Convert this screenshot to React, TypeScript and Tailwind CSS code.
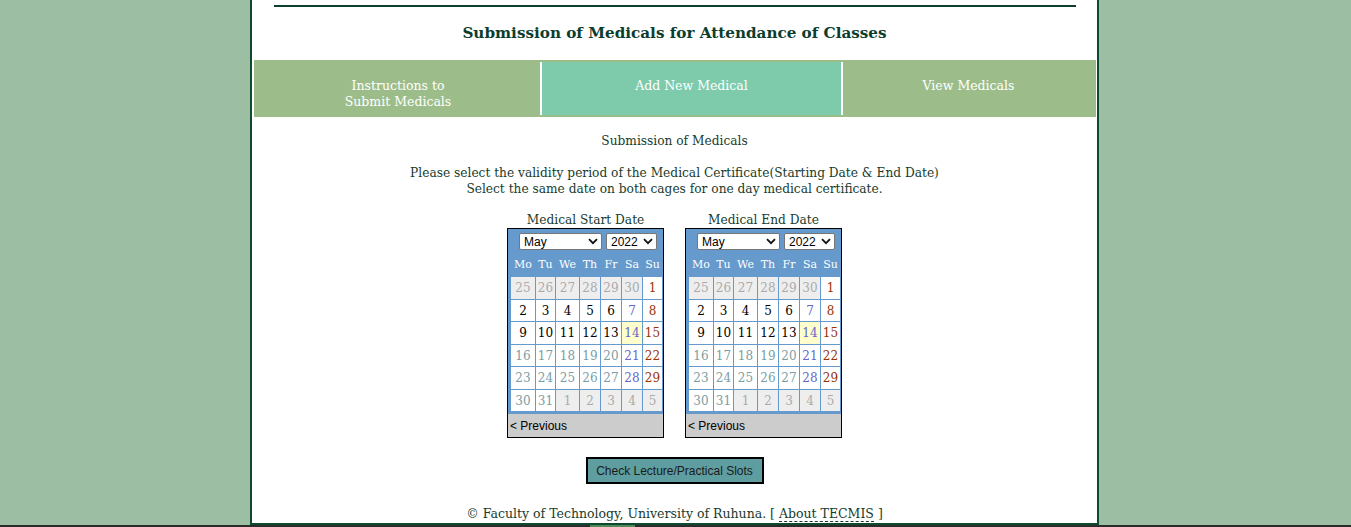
import React from 'react';

const serif = { fontFamily: '"DejaVu Serif", Georgia, serif' };
const sans = { fontFamily: '"Liberation Sans", Tahoma, sans-serif' };

type Day = { n: number; kind: 'other' | 'past' | 'sat' | 'sun' | 'today' | 'future' };

const weeks: Day[][] = [
    [25, 26, 27, 28, 29, 30].map((n) => ({ n, kind: 'other' as const })).concat([{ n: 1, kind: 'sun' }]),
    [
        { n: 2, kind: 'past' },
        { n: 3, kind: 'past' },
        { n: 4, kind: 'past' },
        { n: 5, kind: 'past' },
        { n: 6, kind: 'past' },
        { n: 7, kind: 'sat' },
        { n: 8, kind: 'sun' },
    ],
    [
        { n: 9, kind: 'past' },
        { n: 10, kind: 'past' },
        { n: 11, kind: 'past' },
        { n: 12, kind: 'past' },
        { n: 13, kind: 'past' },
        { n: 14, kind: 'today' },
        { n: 15, kind: 'sun' },
    ],
    [
        { n: 16, kind: 'future' },
        { n: 17, kind: 'future' },
        { n: 18, kind: 'future' },
        { n: 19, kind: 'future' },
        { n: 20, kind: 'future' },
        { n: 21, kind: 'sat' },
        { n: 22, kind: 'sun' },
    ],
    [
        { n: 23, kind: 'future' },
        { n: 24, kind: 'future' },
        { n: 25, kind: 'future' },
        { n: 26, kind: 'future' },
        { n: 27, kind: 'future' },
        { n: 28, kind: 'sat' },
        { n: 29, kind: 'sun' },
    ],
    [
        { n: 30, kind: 'future' },
        { n: 31, kind: 'future' },
        ...[1, 2, 3, 4, 5].map((n) => ({ n, kind: 'other' as const })),
    ],
];

const dayNames = ['Mo', 'Tu', 'We', 'Th', 'Fr', 'Sa', 'Su'];

const kindClass: Record<Day['kind'], string> = {
    other: 'bg-[#eeeeee] text-[#aaaaaa]',
    past: 'bg-white text-black',
    sat: 'bg-white text-[#6666cc]',
    sun: 'bg-white text-[#993300]',
    today: 'bg-[#ffffcc] text-[#6666cc]',
    future: 'bg-white text-[#7a9ea5]',
};

function Chevron() {
    return (
        <svg width="10" height="7" viewBox="0 0 10 7" className="shrink-0">
            <path d="M1 1.2 L5 5.2 L9 1.2" fill="none" stroke="#111" strokeWidth="1.8" />
        </svg>
    );
}

function FakeSelect({ value, className }: { value: string; className: string }) {
    return (
        <div
            className={`flex h-[17px] items-center justify-between rounded-[2px] border border-[#767676] bg-white pr-[3px] pl-[4px] text-[12px] text-black ${className}`}
            style={sans}
        >
            <span>{value}</span>
            <Chevron />
        </div>
    );
}

function Calendar({ label }: { label: string }) {
    return (
        <div className="flex flex-col items-center">
            <div className="h-[16px] text-[12.2px] leading-[16px] text-[#173b2c]" style={serif}>
                {label}
            </div>
            <div className="w-[157px] border border-black bg-[#6699cc]">
                <div className="flex gap-[4px] pt-[4px] pl-[11px]">
                    <FakeSelect value="May" className="w-[83px]" />
                    <FakeSelect value="2022" className="w-[51px]" />
                </div>
                <div
                    className="mt-[6px] grid h-[19px] grid-cols-[24px_19px_23px_20px_20px_20px_19px] gap-x-px pl-[3px] text-[11px] text-white"
                    style={serif}
                >
                    {dayNames.map((d) => (
                        <div key={d} className="flex items-center justify-center">
                            {d}
                        </div>
                    ))}
                </div>
                <div
                    className="mt-[2px] ml-[3px] grid grid-cols-[24px_19px_23px_20px_20px_20px_19px] grid-rows-[22px_21px_22px_21px_22px_21px] gap-px text-[12px]"
                    style={serif}
                >
                    {weeks.flat().map((d, i) => (
                        <div key={i} className={`flex items-center justify-center ${kindClass[d.kind]}`}>
                            {d.n}
                        </div>
                    ))}
                </div>
                <div className="mt-[3px] flex h-[23px] items-center bg-[#cccccc] pl-[2px] text-[12px] text-black" style={sans}>
                    &lt; Previous
                </div>
            </div>
        </div>
    );
}

export default function App() {
    return (
        <div className="flex h-[527px] flex-col bg-[#9cbfa4]">
            <div className="ml-[250px] flex h-[525px] w-[849px] flex-col border-x-2 border-b-2 border-[#0d4a30] bg-white" style={serif}>
                <div className="mx-auto mt-[5px] h-[2px] w-[802px] bg-[#0d3f2c]" />
                <div className="flex h-[53px] items-center justify-center text-[15.2px] font-bold text-[#0b3d2e]">
                    Submission of Medicals for Attendance of Classes
                </div>
                <div className="mr-px ml-[2px] flex h-[57px] bg-[#9cbd8a] p-[2px] text-[12.5px] leading-[16px] text-white">
                    <div className="flex w-[284px] flex-col items-center pt-[16px]">
                        <span>Instructions to</span>
                        <span>Submit Medicals</span>
                    </div>
                    <div className="w-[2px] bg-white" />
                    <div className="flex w-[299px] flex-col items-center bg-[#7dcbab] pt-[16px]">Add New Medical</div>
                    <div className="w-[2px] bg-white" />
                    <div className="flex flex-1 flex-col items-center pt-[16px]">View Medicals</div>
                </div>
                <div className="mt-[16px] text-center text-[12.2px] leading-[16px] text-[#173b2c]">
                    <div>Submission of Medicals</div>
                    <div className="h-[16px]" />
                    <div>Please select the validity period of the Medical Certificate(Starting Date &amp; End Date)</div>
                    <div>Select the same date on both cages for one day medical certificate.</div>
                </div>
                <div className="mt-[15px] flex justify-center gap-[21px]">
                    <Calendar label="Medical Start Date" />
                    <Calendar label="Medical End Date" />
                </div>
                <div className="mt-[19px] flex justify-center">
                    <button
                        className="h-[27px] w-[178px] border-2 border-black bg-[#5f9ea0] text-[12px] text-[#1a1a1a]"
                        style={sans}
                    >
                        Check Lecture/Practical Slots
                    </button>
                </div>
                <div className="mt-[22px] text-center text-[12.5px] leading-[16px] text-[#173b2c]">
                    © Faculty of Technology, University of Ruhuna. [{' '}
                    <span className="border-b border-dashed border-[#173b2c]">About TECMIS</span> ]
                </div>
            </div>
            <div className="flex h-[2px] bg-[#2b2b2b]">
                <div className="ml-[590px] w-[45px] bg-[#4f8a58]" />
            </div>
        </div>
    );
}
